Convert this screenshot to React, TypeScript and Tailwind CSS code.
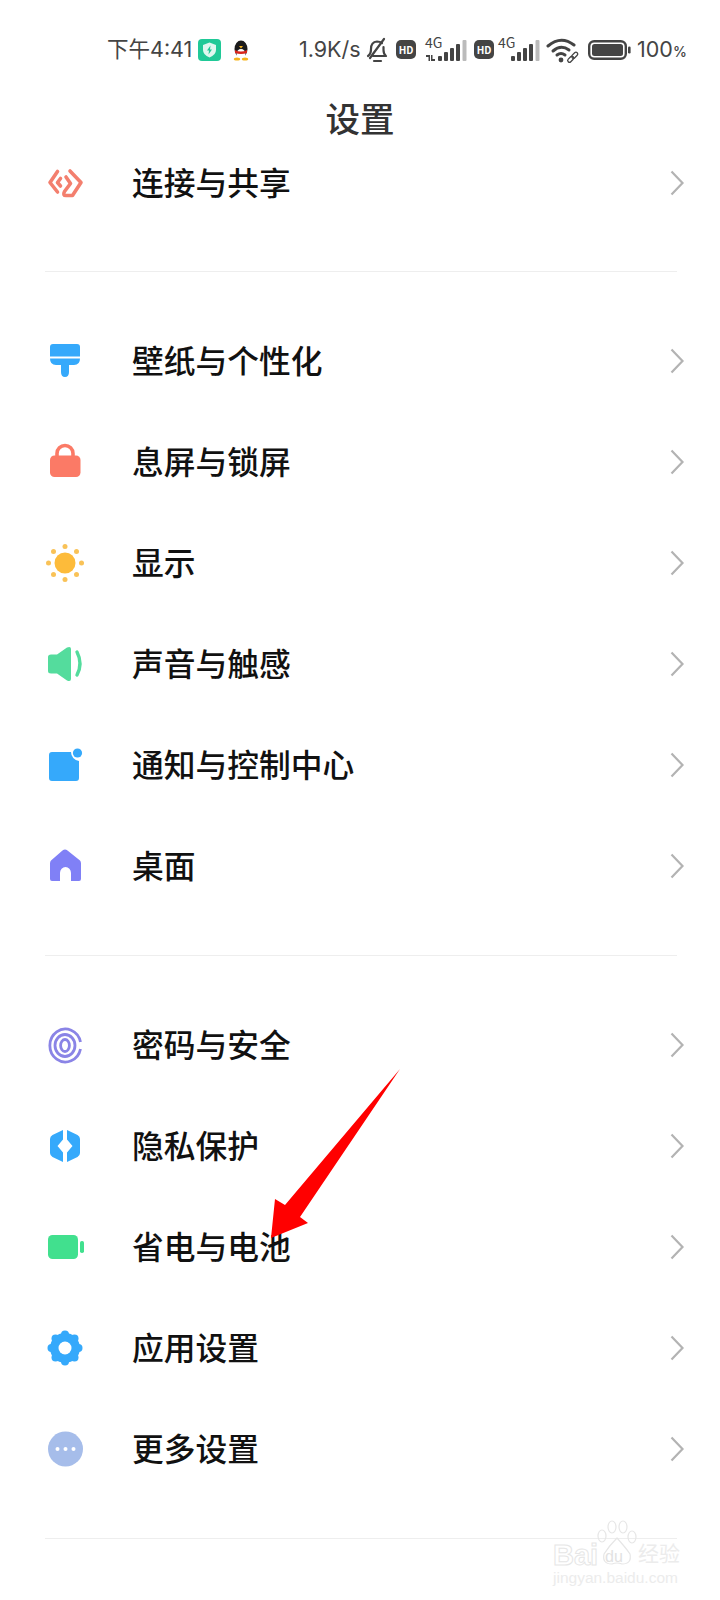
import type { ReactNode } from 'react';

const Svg = ({ children }: { children: ReactNode }) => (
  <svg width="40" height="40" viewBox="0 0 40 40" className="shrink-0">
    {children}
  </svg>
);

const LinkIcon = () => (
  <Svg>
    <g fill="none" stroke="#f37f6e" strokeWidth="3.6" strokeLinejoin="round" strokeLinecap="round">
      <path d="M12.5 8.5 L5 19.5 L12.5 29" />
      <path d="M15.5 15.5 L12.5 19.5 L15.5 23" />
      <path d="M25 8 L36 19.5 L27.5 32.5 H21 Q17.5 32.5 19.5 28.5 L25.5 20.5 L21 14" />
    </g>
  </Svg>
);

const BrushIcon = () => (
  <Svg>
    <path d="M5 6 Q5 3 8 3 H32 Q35 3 35 6 V15.5 H5 Z" fill="#35a9fb" />
    <path d="M5 17.5 H35 Q35 24 29 24 H24 V31 Q24 36 20 36 Q16 36 16 31 V24 H11 Q5 24 5 17.5 Z" fill="#35a9fb" />
  </Svg>
);

const LockIcon = () => (
  <Svg>
    <path d="M12 16 V11.5 A8 8 0 0 1 28 11.5 V16" fill="none" stroke="#fb7a66" strokeWidth="3.6" />
    <rect x="5" y="13.5" width="30.5" height="21.5" rx="4.5" fill="#fb7a66" />
  </Svg>
);

const SunIcon = () => (
  <Svg>
    <circle cx="20" cy="20" r="10.5" fill="#fdbb3a" />
    <g fill="#f9c257">
      <circle cx="20" cy="3.5" r="2.5" />
      <circle cx="20" cy="36.5" r="2.5" />
      <circle cx="3.5" cy="20" r="2.5" />
      <circle cx="36.5" cy="20" r="2.5" />
      <circle cx="8.5" cy="8.5" r="2.5" />
      <circle cx="31.5" cy="8.5" r="2.5" />
      <circle cx="8.5" cy="31.5" r="2.5" />
      <circle cx="31.5" cy="31.5" r="2.5" />
    </g>
  </Svg>
);

const SoundIcon = () => (
  <Svg>
    <path d="M3 13 Q3 10.5 6 10.5 H12 L22 3.5 Q26 2 26 5 V35 Q26 38 22 36.5 L12 29.5 H6 Q3 29.5 3 27 Z" fill="#54dc9d" />
    <path d="M32 8 Q38 19.5 32 31" fill="none" stroke="#54dc9d" strokeWidth="3.4" strokeLinecap="round" />
  </Svg>
);

const NotifyIcon = () => (
  <Svg>
    <path d="M7 7 H26 A9 9 0 0 0 34 16 V33 Q34 36 31 36 H7 Q4 36 4 33 V10 Q4 7 7 7 Z" fill="#35a9fb" />
    <circle cx="32.5" cy="8" r="4.6" fill="#35a9fb" />
  </Svg>
);

const HomeIcon = () => (
  <Svg>
    <path
      d="M6 14.5 L17.5 4.5 Q20 2.5 22.5 4.5 L35 14.5 Q36 15.5 36 17.5 V33 Q36 35 34 35 H26 V27 A5.5 6 0 0 0 15 27 V35 H7 Q5 35 5 33 V17.5 Q5 15.5 6 14.5 Z"
      fill="#8080f6"
    />
  </Svg>
);

const PasswordIcon = () => (
  <Svg>
    <g fill="none" stroke="#8a84e6" strokeWidth="2.8">
      <path d="M35.5 17 A15.5 16.5 0 1 0 35.5 24" />
      <ellipse cx="20" cy="20.5" rx="10" ry="11" />
      <ellipse cx="20" cy="20.5" rx="4.4" ry="6" />
    </g>
  </Svg>
);

const PrivacyIcon = () => (
  <Svg>
    <path d="M18 4 V13.5 L12.5 20 L18 26.5 V36 L7.5 31 Q5 29.5 5 27 V13 Q5 10.5 7.5 9 Z" fill="#35a9fb" />
    <path d="M22 4 V13.5 L27.5 20 L22 26.5 V36 L32.5 31 Q35 29.5 35 27 V13 Q35 10.5 32.5 9 Z" fill="#35a9fb" />
  </Svg>
);

const BatteryIcon = () => (
  <Svg>
    <rect x="3" y="8" width="30" height="24" rx="4.5" fill="#41e08e" />
    <rect x="35" y="14" width="4" height="12" rx="1.8" fill="#41e08e" />
  </Svg>
);

const GearIcon = () => (
  <Svg>
    <g fill="#35a9fb">
      <circle cx="20" cy="20" r="15" />
      <circle cx="20" cy="6.5" r="4" />
      <circle cx="20" cy="33.5" r="4" />
      <circle cx="6.5" cy="20" r="4" />
      <circle cx="33.5" cy="20" r="4" />
      <circle cx="10.5" cy="10.5" r="4" />
      <circle cx="29.5" cy="10.5" r="4" />
      <circle cx="10.5" cy="29.5" r="4" />
      <circle cx="29.5" cy="29.5" r="4" />
    </g>
    <circle cx="20" cy="20" r="6.5" fill="#fff" />
  </Svg>
);

const MoreIcon = () => (
  <Svg>
    <circle cx="20.5" cy="20" r="17.5" fill="#a6bdea" />
    <circle cx="12.5" cy="20" r="2" fill="#fff" />
    <circle cx="20.5" cy="20" r="2" fill="#fff" />
    <circle cx="28.5" cy="20" r="2" fill="#fff" />
  </Svg>
);

const Row = ({ icon, label }: { icon: ReactNode; label: string }) => (
  <div className="flex h-[101px] items-center pl-[45px] pr-[35px]">
    {icon}
    <span className="mb-[2px] ml-[47px] flex-1 text-[31.75px] font-medium leading-none text-[#111]">{label}</span>
    <svg width="16" height="28" viewBox="0 0 16 28">
      <path d="M2.5 2.5 L13.5 14 L2.5 25.5" fill="none" stroke="#b3b3b3" strokeWidth="2.2" />
    </svg>
  </div>
);

const Divider = ({ className }: { className: string }) => (
  <div className={`ml-[45px] h-px w-[632px] bg-[#eeeeee] ${className}`} />
);

const Hd = () => (
  <span className="flex h-[19px] w-[20px] items-center justify-center rounded-[5px] bg-[#444] text-[10px] font-bold leading-none text-white">
    HD
  </span>
);

const Signal = ({ arrows }: { arrows?: boolean }) => (
  <span className="relative block h-[28px] w-[42px]">
    <span className="absolute left-0 top-[-1px] text-[14px] leading-[14px] text-[#444]">4G</span>
    <svg width="42" height="28" viewBox="0 0 42 28" className="absolute left-0 top-0">
      {arrows && <path d="M1 19 H5 V25 H3.5 V21 H1 Z M6 25 H10 V23 H7.5 V19 H6 Z" fill="#444" />}
      <rect x="13" y="20" width="4" height="5" rx="1" fill="#444" />
      <rect x="19" y="16" width="4" height="9" rx="1" fill="#444" />
      <rect x="25" y="12" width="4" height="13" rx="1" fill="#444" />
      <rect x="31" y="8" width="4" height="17" rx="1" fill="#444" />
      <rect x="37.5" y="4" width="4" height="21" rx="1" fill="#bbb" />
    </svg>
  </span>
);

export default function App() {
  return (
    <div className="relative h-[1600px] w-[720px] overflow-hidden bg-white font-['Noto_Sans_CJK_SC',sans-serif]">
      {/* status bar */}
      <div className="flex h-[96px] items-start pl-[107px] pt-[36px] text-[#444]">
        <div className="flex h-[28px] items-center font-['Inter','Noto_Sans_CJK_SC',sans-serif] text-[21.5px] leading-none">
          <span className="w-[88px] whitespace-nowrap">下午4:41</span>
          <svg width="23" height="22" viewBox="0 0 23 22" className="ml-[3px]">
            <rect width="23" height="22" rx="4" fill="#20c997" />
            <path d="M11.5 3.5 L18 6 V11 Q18 16 11.5 18.5 Q5 16 5 11 V6 Z" fill="#dff7ef" />
            <path d="M12.5 6.5 L9 11.5 H11 L10.5 15.5 L14 10.5 H12 Z" fill="#20c997" />
          </svg>
          <svg width="18" height="22" viewBox="0 0 18 22" className="ml-[11px]">
            <ellipse cx="9" cy="10" rx="6.5" ry="8.5" fill="#1b1b1b" />
            <ellipse cx="9" cy="15" rx="4.5" ry="5" fill="#fff" />
            <path d="M3 11 Q9 14 15 11 L15 14 Q9 16 3 14 Z" fill="#d8261c" />
            <path d="M7 7 L11 7 L9 9.5 Z" fill="#f5b31b" />
            <ellipse cx="5" cy="20" rx="3.2" ry="1.6" fill="#f5b31b" />
            <ellipse cx="13" cy="20" rx="3.2" ry="1.6" fill="#f5b31b" />
          </svg>
          <span className="ml-[49px] w-[63px] whitespace-nowrap">1.9K/s</span>
          <svg width="24" height="26" viewBox="0 0 24 26" className="ml-[3px]">
            <g fill="none" stroke="#444" strokeWidth="2.2" strokeLinecap="round" strokeLinejoin="round">
              <path d="M3 19 Q6 17 6 12 Q6 5 12 4.5 Q15 4.5 17 6 M18.5 10 V13 Q18.5 17 21 19 H8" />
              <path d="M19 2 L5 21" />
              <path d="M9 24 H16" />
            </g>
          </svg>
        </div>
        <div className="ml-[7px] mt-[4px]">
          <Hd />
        </div>
        <div className="ml-[9px]">
          <Signal arrows />
        </div>
        <div className="ml-[7px] mt-[4px]">
          <Hd />
        </div>
        <div className="ml-[4px]">
          <Signal />
        </div>
        <svg width="34" height="28" viewBox="0 0 34 28" className="ml-[6px]">
          <g fill="none" stroke="#444" strokeWidth="3" strokeLinecap="round">
            <path d="M2 10 Q15 -1 28 9" />
            <path d="M7 15 Q15 8 23 14" />
            <path d="M11 19 Q15 16 19 19" />
          </g>
          <circle cx="15" cy="24" r="2.4" fill="#444" />
          <g fill="none" stroke="#444" strokeWidth="1.3">
            <rect x="21" y="21.5" width="7" height="3.6" rx="1.8" transform="rotate(-45 24.5 23)" />
            <rect x="25" y="17.5" width="7" height="3.6" rx="1.8" transform="rotate(-45 28.5 19)" />
          </g>
        </svg>
        <svg width="43" height="22" viewBox="0 0 43 22" className="ml-[8px] mt-[3px]">
          <rect x="1.2" y="2.2" width="36.6" height="17.6" rx="5" fill="none" stroke="#444" strokeWidth="2.4" />
          <rect x="4" y="5" width="31" height="12" rx="2.5" fill="#444" />
          <rect x="40" y="7.5" width="2.6" height="7" rx="1.2" fill="#444" />
        </svg>
        <span className="ml-[6px] flex h-[28px] items-center whitespace-nowrap font-['Inter',sans-serif] text-[21.5px] leading-none">
          100<span className="mt-[3px] text-[14px] font-medium">%</span>
        </span>
      </div>

      {/* title */}
      <div className="h-[36px] pt-[6px] text-center text-[34.5px] font-medium leading-[30px] text-[#333]">设置</div>

      <Row icon={<LinkIcon />} label="连接与共享" />
      <Divider className="mb-[38px] mt-[38px]" />

      <Row icon={<BrushIcon />} label="壁纸与个性化" />
      <Row icon={<LockIcon />} label="息屏与锁屏" />
      <Row icon={<SunIcon />} label="显示" />
      <Row icon={<SoundIcon />} label="声音与触感" />
      <Row icon={<NotifyIcon />} label="通知与控制中心" />
      <Row icon={<HomeIcon />} label="桌面" />
      <Divider className="mb-[38px] mt-[39px]" />

      <Row icon={<PasswordIcon />} label="密码与安全" />
      <Row icon={<PrivacyIcon />} label="隐私保护" />
      <Row icon={<BatteryIcon />} label="省电与电池" />
      <Row icon={<GearIcon />} label="应用设置" />
      <Row icon={<MoreIcon />} label="更多设置" />
      <Divider className="mt-[39px]" />

      {/* red annotation arrow */}
      <svg width="140" height="180" viewBox="0 0 140 180" className="absolute left-[265px] top-[1065px]">
        <path d="M135 4 L20 140 L10 134 L6 173 L43 158 L35 152 Z" fill="#ff0000" />
      </svg>

      {/* watermark */}
      <div className="absolute left-[553px] top-[1520px] h-[68px] w-[130px] font-['Liberation_Sans',sans-serif] text-[#ececec]">
        <span className="absolute left-0 top-[21px] text-[29px] font-bold leading-none text-transparent [-webkit-text-stroke:1px_#e6e6e6]">Bai</span>
        <svg width="44" height="48" viewBox="0 0 44 48" className="absolute left-[43px] top-0">
          <g fill="none" stroke="#e6e6e6" strokeWidth="1.2">
            <ellipse cx="6" cy="16" rx="4" ry="6" />
            <ellipse cx="16" cy="7" rx="4" ry="6" />
            <ellipse cx="27" cy="7" rx="4" ry="6" />
            <ellipse cx="36" cy="17" rx="4" ry="6" />
            <path d="M21 18 Q30 28 34 34 Q36 44 26 44 Q21 42 16 44 Q6 44 8 34 Q13 26 21 18 Z" />
          </g>
        </svg>
        <span className="absolute left-[52px] top-[29px] text-[16px] leading-none text-[#e2e2e2]">du</span>
        <span className="absolute left-[85px] top-[22px] whitespace-nowrap font-['Noto_Sans_CJK_SC',sans-serif] text-[21px] leading-none">经验</span>
        <span className="absolute left-0 top-[50px] whitespace-nowrap text-[15.5px] leading-none">jingyan.baidu.com</span>
      </div>
    </div>
  );
}
